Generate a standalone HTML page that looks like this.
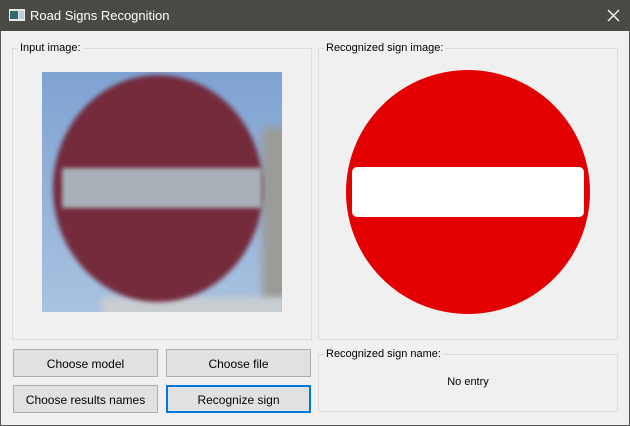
<!DOCTYPE html>
<html><head><style>
*{margin:0;padding:0;box-sizing:border-box}
body{width:630px;height:426px;overflow:hidden;background:#f0f0f0;font-family:"Liberation Sans",sans-serif;font-size:12px;color:#000;position:relative}
.win{position:absolute;left:0;top:0;width:630px;height:426px;border:1px solid #555;}
.title{position:absolute;left:0;top:0;width:630px;height:31px;background:#4a4946;color:#fff;font-size:13px}
.title span{position:absolute;left:30px;top:8px}
.grp{position:absolute;border:1px solid #dcdcdc}
.lbl{position:absolute;background:#f0f0f0;padding:0 2px;font-size:11px}
.btn{position:absolute;background:#e1e1e1;border:1px solid #adadad;text-align:center;line-height:29px;font-size:12px}
</style></head><body>
<div class="title">
<svg style="position:absolute;left:9px;top:9px" width="16" height="12"><rect x="0" y="0" width="16" height="12" fill="#e8e8e8"/><rect x="1" y="2" width="8" height="8" fill="#2a6f6a"/><rect x="10" y="2" width="5" height="8" fill="#bcd"/></svg>
<span>Road Signs Recognition</span>
<svg style="position:absolute;left:607px;top:9px" width="13" height="13"><path d="M1 1L12 12M12 1L1 12" stroke="#fff" stroke-width="1.3"/></svg>
</div>
<div class="win" style="border-top:none;top:31px;height:395px"></div>
<div class="grp" style="left:12px;top:48px;width:300px;height:292px"></div>
<div class="lbl" style="left:18px;top:42px">Input image:</div>
<div style="position:absolute;left:42px;top:72px;width:240px;height:240px;overflow:hidden;background:linear-gradient(#7fa3d3,#a9c2e0)">
<div style="position:absolute;left:220px;top:55px;width:30px;height:190px;background:#9a9c97;filter:blur(4px)"></div>
<div style="position:absolute;left:60px;top:225px;width:200px;height:20px;background:#c8cdd2;filter:blur(3px)"></div>
<div style="position:absolute;left:11px;top:3px;width:210px;height:227px;border-radius:50%;background:#742b3c;filter:blur(2.5px)"></div>
<div style="position:absolute;left:20px;top:96px;width:200px;height:40px;background:#a7b1b7;filter:blur(2px)"></div>
</div>
<div class="grp" style="left:318px;top:48px;width:300px;height:292px"></div>
<div class="lbl" style="left:324px;top:42px">Recognized sign image:</div>
<svg style="position:absolute;left:318px;top:48px" width="300" height="292"><circle cx="150" cy="144" r="122" fill="#e20000"/><rect x="34" y="119" width="232" height="50" rx="5" fill="#fff"/></svg>
<div class="btn" style="left:13px;top:349px;width:145px;height:28px">Choose model</div>
<div class="btn" style="left:166px;top:349px;width:145px;height:28px">Choose file</div>
<div class="btn" style="left:13px;top:385px;width:145px;height:28px">Choose results names</div>
<div class="btn" style="left:166px;top:385px;width:145px;height:28px;border:2px solid #0078d7;line-height:27px">Recognize sign</div>
<div class="grp" style="left:318px;top:354px;width:300px;height:58px"></div>
<div class="lbl" style="left:324px;top:348px">Recognized sign name:</div>
<div style="position:absolute;left:318px;top:376px;width:300px;text-align:center;font-size:11px">No entry</div>
</body></html>
